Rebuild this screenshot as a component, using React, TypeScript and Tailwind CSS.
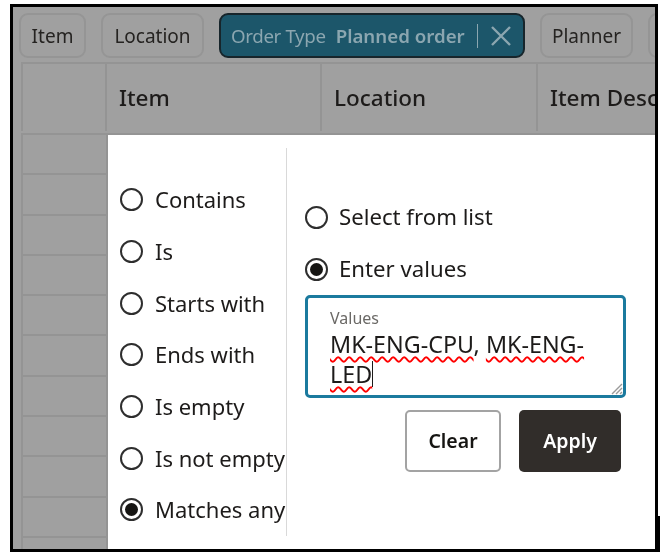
const font = "font-['Noto_Sans',sans-serif]"

const operators = ["Contains", "Is", "Starts with", "Ends with", "Is empty", "Is not empty", "Matches any"]
const rowLines = Array.from({ length: 11 })

const Radio = ({ checked }: { checked?: boolean }) => (
  <span className="flex h-[23px] w-[23px] shrink-0 items-center justify-center rounded-full border-2 border-[#2e2e2e] bg-white">
    {checked && <span className="h-[13px] w-[13px] rounded-full bg-[#161513]" />}
  </span>
)

const Chip = ({ label, width }: { label: string; width: string }) => (
  <div className={`flex h-[45px] shrink-0 items-center justify-center rounded-[9px] border-2 border-[#959595] pt-[1px] text-[19px] text-[#252321] ${width}`}>
    {label}
  </div>
)

const Squiggle = ({ children }: { children: string }) => (
  <span className="underline decoration-[#f00] decoration-wavy decoration-[1.5px] underline-offset-[3px]">{children}</span>
)

export default function App() {
  return (
    <div className={`relative h-[556px] w-[662px] overflow-hidden bg-white pl-[10px] pt-[4px] blur-[0.35px] ${font}`}>
      <div className="h-[548px] w-[648px] overflow-hidden border-[3px] border-black bg-[#a0a0a0]">
        <div className="flex h-[55px] gap-[15px] pl-[6px] pt-[6px]">
          <Chip label="Item" width="w-[67px]" />
          <Chip label="Location" width="w-[103px]" />
          <div className="flex h-[45px] w-[306px] shrink-0 items-center whitespace-nowrap rounded-[9px] border-2 border-[#17252b] bg-[#1c566a] pl-[10px] pt-[1px] text-[18.7px] text-[#8ba6b0]">
            <span className="tracking-[-0.35px]">Order Type</span>
            <span className="ml-[10px] font-semibold">Planned order</span>
            <span className="ml-[12px] h-[24px] w-px shrink-0 bg-[#8ba6b0]" />
            <svg className="ml-[11px] shrink-0" width="24" height="24" viewBox="0 0 24 24" fill="none" stroke="#8ba6b0" strokeWidth="2.4">
              <path d="M3 3l18 18M21 3L3 21" />
            </svg>
          </div>
          <Chip label="Planner" width="w-[93px]" />
          <Chip label="" width="w-[93px]" />
        </div>

        <div className="ml-[8px] flex h-[73px] border-y-2 border-[#949494] pb-[2px] text-[22.5px] font-medium text-[#1d1b1a]">
          <div className="w-[86px] shrink-0 border-x-2 border-[#949494]" />
          <div className="flex w-[215px] shrink-0 items-center border-r-2 border-[#949494] pl-[12px]">Item</div>
          <div className="flex w-[216px] shrink-0 items-center border-r-2 border-[#949494] pl-[12px]">Location</div>
          <div className="flex flex-1 items-center overflow-hidden whitespace-nowrap pl-[12px]">Item Description</div>
        </div>

        <div className="ml-[8px] flex">
          <div className="w-[87px] shrink-0">
            {rowLines.map((_, i) => (
              <div key={i} className="h-[40.3px] border-b-2 border-x-2 border-[#949494]" />
            ))}
          </div>

          <div className="flex h-[414px] w-[547px] shrink-0 bg-white">
            <div className="mt-[13px] h-[388px] w-[179px] shrink-0 overflow-hidden whitespace-nowrap border-r border-[#d9d9d9] pl-[12px] pt-[26px]">
              {operators.map((op) => (
                <label key={op} className="flex h-[51.7px] items-center gap-[12px] text-[22px] text-[#1d1b1a]">
                  <Radio checked={op === "Matches any"} />
                  {op}
                </label>
              ))}
            </div>

            <div className="mt-[13px] pl-[18px] pt-[43px]">
              <label className="flex h-[52px] items-center gap-[11px] text-[22.2px] text-[#1d1b1a]">
                <Radio />
                Select from list
              </label>
              <label className="flex h-[52px] items-center gap-[11px] text-[22.2px] text-[#1d1b1a]">
                <Radio checked />
                Enter values
              </label>

              <div className="relative h-[103px] w-[321px] rounded-[5px] border-[3px] border-[#1b7a9e] pl-[22px] pt-[10px]">
                <p className="text-[16px] leading-[21px] text-[#6b6966]">Values</p>
                <div className="text-[23.3px] leading-[30px] text-[#1d1b1a]">
                  <div className="whitespace-nowrap">
                    <Squiggle>MK-ENG-CPU</Squiggle>, <Squiggle>MK-ENG-</Squiggle>
                  </div>
                  <div className="flex items-center">
                    <Squiggle>LED</Squiggle>
                    <span className="h-[26px] w-px bg-[#1d1b1a]" />
                  </div>
                </div>
                <svg className="absolute bottom-0 right-0" width="12" height="12" viewBox="0 0 12 12" stroke="#9a9a9a" strokeWidth="1.4">
                  <path d="M1 11L11 1M5 11l6-6M9 11l2-2" />
                </svg>
              </div>

              <div className="mt-[12px] flex w-[316px] justify-end gap-[18px] text-[19.5px] font-semibold">
                <button className="h-[62px] w-[96px] rounded-[5px] border-2 border-[#a3a3a3] bg-white text-[#161513]">Clear</button>
                <button className="h-[62px] w-[102px] rounded-[5px] bg-[#312d2a] text-white">Apply</button>
              </div>
            </div>
          </div>
        </div>
      </div>
      <div className="absolute left-[658px] top-[516px] h-[36px] w-[2px] bg-black" />
    </div>
  )
}
